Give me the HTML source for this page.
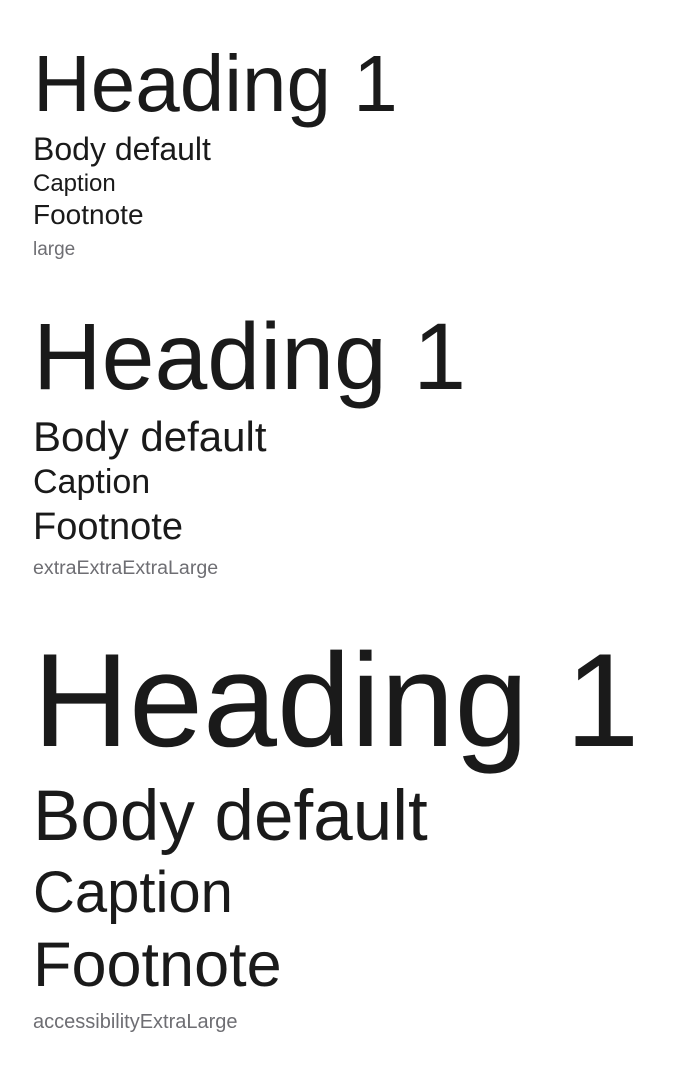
<!DOCTYPE html>
<html><head><meta charset="utf-8"><style>
body{margin:0;background:#fff;width:693px;height:1065px;position:relative;overflow:hidden;font-family:"Liberation Sans",Helvetica,Arial,sans-serif;color:#1a1a1a}
div{position:absolute;left:33px;line-height:1;white-space:nowrap}
.g{color:#6e6e73}
</style></head><body>
<div style="top:44px;font-size:80px">Heading 1</div>
<div style="top:133px;font-size:32px">Body default</div>
<div style="top:172px;font-size:24px">Caption</div>
<div style="top:201px;font-size:28px">Footnote</div>
<div class="g" style="top:240px;font-size:19px">large</div>

<div style="top:310px;font-size:95px">Heading 1</div>
<div style="top:416px;font-size:42px">Body default</div>
<div style="top:465px;font-size:34px">Caption</div>
<div style="top:508px;font-size:38px">Footnote</div>
<div class="g" style="top:559px;font-size:19.6px">extraExtraExtraLarge</div>

<div style="top:635px;font-size:133px">Heading 1</div>
<div style="top:781px;font-size:71px">Body default</div>
<div style="top:864px;font-size:58px">Caption</div>
<div style="top:934px;font-size:63px">Footnote</div>
<div class="g" style="top:1012px;font-size:20px">accessibilityExtraLarge</div>
</body></html>
